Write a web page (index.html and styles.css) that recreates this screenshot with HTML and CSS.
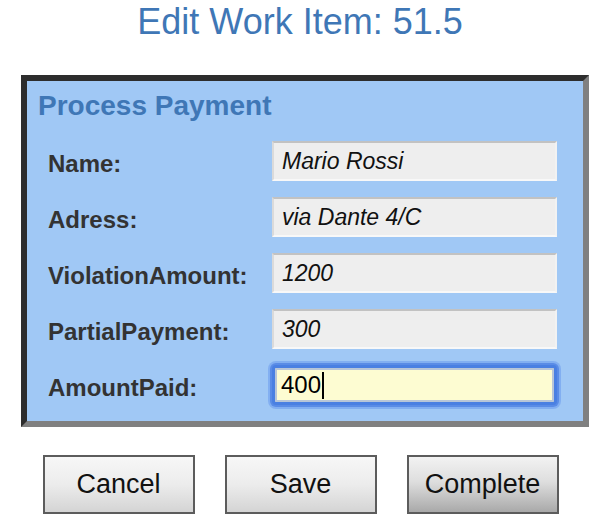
FILE: index.html
```html
<!DOCTYPE html>
<html lang="en">
<head>
<meta charset="utf-8">
<title>Edit Work Item: 51.5</title>
<link rel="stylesheet" href="styles.css">
</head>
<body>
  <h1 class="title">Edit Work Item: 51.5</h1>
  <section class="panel">
    <h2 class="panel-title">Process Payment</h2>
    <div class="form">
      <span class="label">Name:</span>
      <div class="field">Mario Rossi</div>
      <span class="label">Adress:</span>
      <div class="field">via Dante 4/C</div>
      <span class="label">ViolationAmount:</span>
      <div class="field">1200</div>
      <span class="label">PartialPayment:</span>
      <div class="field">300</div>
      <span class="label">AmountPaid:</span>
      <div class="field field-focus">400<span class="caret"></span></div>
    </div>
  </section>
  <div class="actions">
    <button class="btn" type="button">Cancel</button>
    <button class="btn" type="button">Save</button>
    <button class="btn btn-primary" type="button">Complete</button>
  </div>
</body>
</html>
```

FILE: styles.css
```css
body {
  margin: 0;
  font-family: "Liberation Sans", Arial, sans-serif;
  background: #fff;
}

.title {
  margin: 0;
  padding-right: 10px;
  text-align: center;
  font-size: 36px;
  font-weight: normal;
  line-height: 43px;
  color: #3f77b6;
}

.panel {
  margin: 32px 21px 0;
  border: 6px solid;
  border-color: #2d2d2d #808080 #808080 #2d2d2d;
  background: #a0c8f5;
  padding: 11px 26px 16px 11px;
}

.panel-title {
  margin: 0;
  font-size: 28px;
  line-height: 28px;
  font-weight: bold;
  color: #3f77b6;
}

.form {
  display: grid;
  grid-template-columns: 224px 285px;
  row-gap: 16px;
  margin-top: 21px;
  padding-left: 10px;
}

.label {
  align-self: center;
  padding-top: 6px;
  font-size: 24px;
  font-weight: bold;
  color: #333;
}

.field {
  height: 40px;
  box-sizing: border-box;
  border: 2px solid;
  border-color: #c2c2c2 #f2f2f2 #f8f8f8 #dadada;
  background: #eeeeee;
  padding: 0 8px;
  display: flex;
  align-items: center;
  font-size: 23px;
  font-style: italic;
  color: #111;
}

.field-focus {
  border: 3px solid #4a80e2;
  border-radius: 4px;
  background: #fdfcd2;
  box-shadow: inset 0 0 0 2px #b8c6d8, 0 0 0 2px #5a8ce6, 0 0 0 4px rgba(110, 158, 238, 0.6);
  padding: 0 6px;
  font-style: normal;
  font-size: 24px;
  color: #000;
}

.caret {
  display: inline-block;
  width: 2px;
  height: 27px;
  margin-left: 1px;
  background: #000;
}

.actions {
  display: flex;
  justify-content: center;
  gap: 30px;
  margin-top: 28px;
  padding-right: 9px;
}

.btn {
  width: 152px;
  height: 59px;
  padding: 0;
  border: 2px solid #5c5c5c;
  border-radius: 0;
  background: linear-gradient(#f7f7f7, #ececec 50%, #d4d4d4);
  font-family: "Liberation Sans", Arial, sans-serif;
  font-size: 27px;
  color: #111;
}

.btn-primary {
  background: linear-gradient(#f2f2f2, #dedede 45%, #a9a9a9);
}
```
